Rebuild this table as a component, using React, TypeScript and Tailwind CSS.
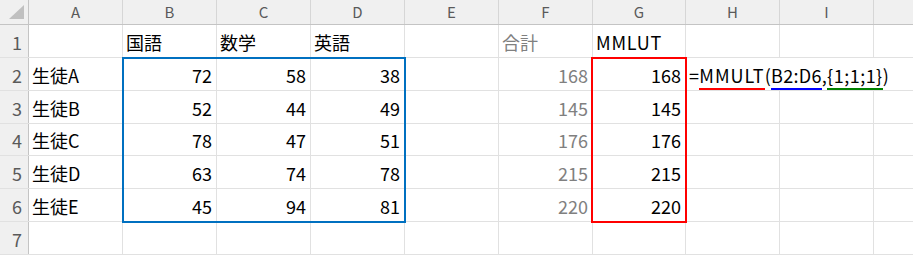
import React from "react";

type Cell = { t?: string; gray?: boolean; right?: boolean; formula?: boolean; wide?: boolean };

const colDefs = [
  { l: "A", w: "w-[94px]" },
  { l: "B", w: "w-[94px]" },
  { l: "C", w: "w-[94px]" },
  { l: "D", w: "w-[94px]" },
  { l: "E", w: "w-[94px]" },
  { l: "F", w: "w-[94px]" },
  { l: "G", w: "w-[93px]" },
  { l: "H", w: "w-[94px]" },
  { l: "I", w: "w-[94px]" },
  { l: "", w: "w-[94px]" },
];

const scores = [
  ["生徒A", 72, 58, 38],
  ["生徒B", 52, 44, 49],
  ["生徒C", 78, 47, 51],
  ["生徒D", 63, 74, 78],
  ["生徒E", 45, 94, 81],
] as const;

function buildRows(): Cell[][] {
  const rows: Cell[][] = [];
  rows.push([
    {},
    { t: "国語" },
    { t: "数学" },
    { t: "英語" },
    {},
    { t: "合計", gray: true },
    { t: "MMLUT", wide: true },
    {},
    {},
    {},
  ]);
  scores.forEach((s, i) => {
    const sum = (s[1] as number) + (s[2] as number) + (s[3] as number);
    rows.push([
      { t: s[0] as string },
      { t: String(s[1]), right: true },
      { t: String(s[2]), right: true },
      { t: String(s[3]), right: true },
      {},
      { t: String(sum), right: true, gray: true },
      { t: String(sum), right: true },
      i === 0 ? { formula: true } : {},
      {},
      {},
    ]);
  });
  rows.push(Array.from({ length: 10 }, () => ({})));
  return rows;
}

const rowHeights = ["h-[33px]", "h-[33px]", "h-[33px]", "h-[32px]", "h-[33px]", "h-[33px]", "h-[33px]"];

function Formula() {
  return (
    <span className="whitespace-nowrap tracking-[0.3px]">
      =
      <span className="inline-block border-b-2 border-[#ff0000] mb-[-2px] tracking-[1px]">MMULT</span>(
      <span className="inline-block border-b-2 border-[#0000ff] mb-[-2px]">B2:D6</span>,
      <span className="inline-block border-b-2 border-[#008000] mb-[-2px] tracking-[0.5px]">{"{1;1;1}"}</span>)
    </span>
  );
}

export default function App() {
  const rows = buildRows();
  const font = { fontFamily: '"Noto Sans CJK JP", "Noto Sans", sans-serif' };
  return (
    <div className="relative w-[913px] h-[256px] overflow-hidden bg-white" style={font}>
      {/* column header */}
      <div className="flex h-[25px] bg-[#f0f0f0] border-b border-[#c4c4c4]">
        <div className="w-[29px] shrink-0 border-r border-[#c4c4c4] flex items-end justify-end pr-[4px] pb-[5px]">
          <svg width="15" height="14" viewBox="0 0 15 14">
            <polygon points="15,0 15,14 0,14" fill="#c0c0c0" />
          </svg>
        </div>
        {colDefs.map((c, i) => (
          <div
            key={i}
            className={`${c.w} shrink-0 flex items-center justify-center text-[15px] text-[#5a5a5a] border-r border-[#d6d6d6]`}
          >
            {c.l}
          </div>
        ))}
      </div>
      {rows.map((r, ri) => (
        <div key={ri} className={`flex ${rowHeights[ri]} border-b border-[#e1e1e1]`}>
          <div className="w-[29px] shrink-0 bg-[#f0f0f0] border-r border-[#c4c4c4] flex items-end justify-end pr-[6px] pb-[2px] leading-[26px] text-[18px] text-[#5a5a5a]">
            {ri + 1}
          </div>
          {r.map((c, ci) => {
            const hideRight = ri === 1 && (ci === 7 || ci === 8);
            return (
              <div
                key={ci}
                className={`${colDefs[ci].w} shrink-0 flex items-end pb-[2px] leading-[26px] text-[18px] whitespace-nowrap ${
                  c.right ? "justify-end pr-[4px]" : "justify-start pl-[3px]"
                } ${c.gray ? "text-[#808080]" : "text-black"} ${
                  hideRight ? "mr-[1px]" : "border-r border-[#e1e1e1]"
                } ${c.wide ? "tracking-[0.8px]" : ""}`}
              >
                {c.formula ? <Formula /> : c.t}
              </div>
            );
          })}
        </div>
      ))}
      {/* range highlight overlays */}
      <div className="absolute left-[122px] top-[57px] w-[284px] h-[166px] border-2 border-[#0070c0] pointer-events-none" />
      <div className="absolute left-[591px] top-[57px] w-[96px] h-[166px] border-2 border-[#ff0000] pointer-events-none" />
    </div>
  );
}
